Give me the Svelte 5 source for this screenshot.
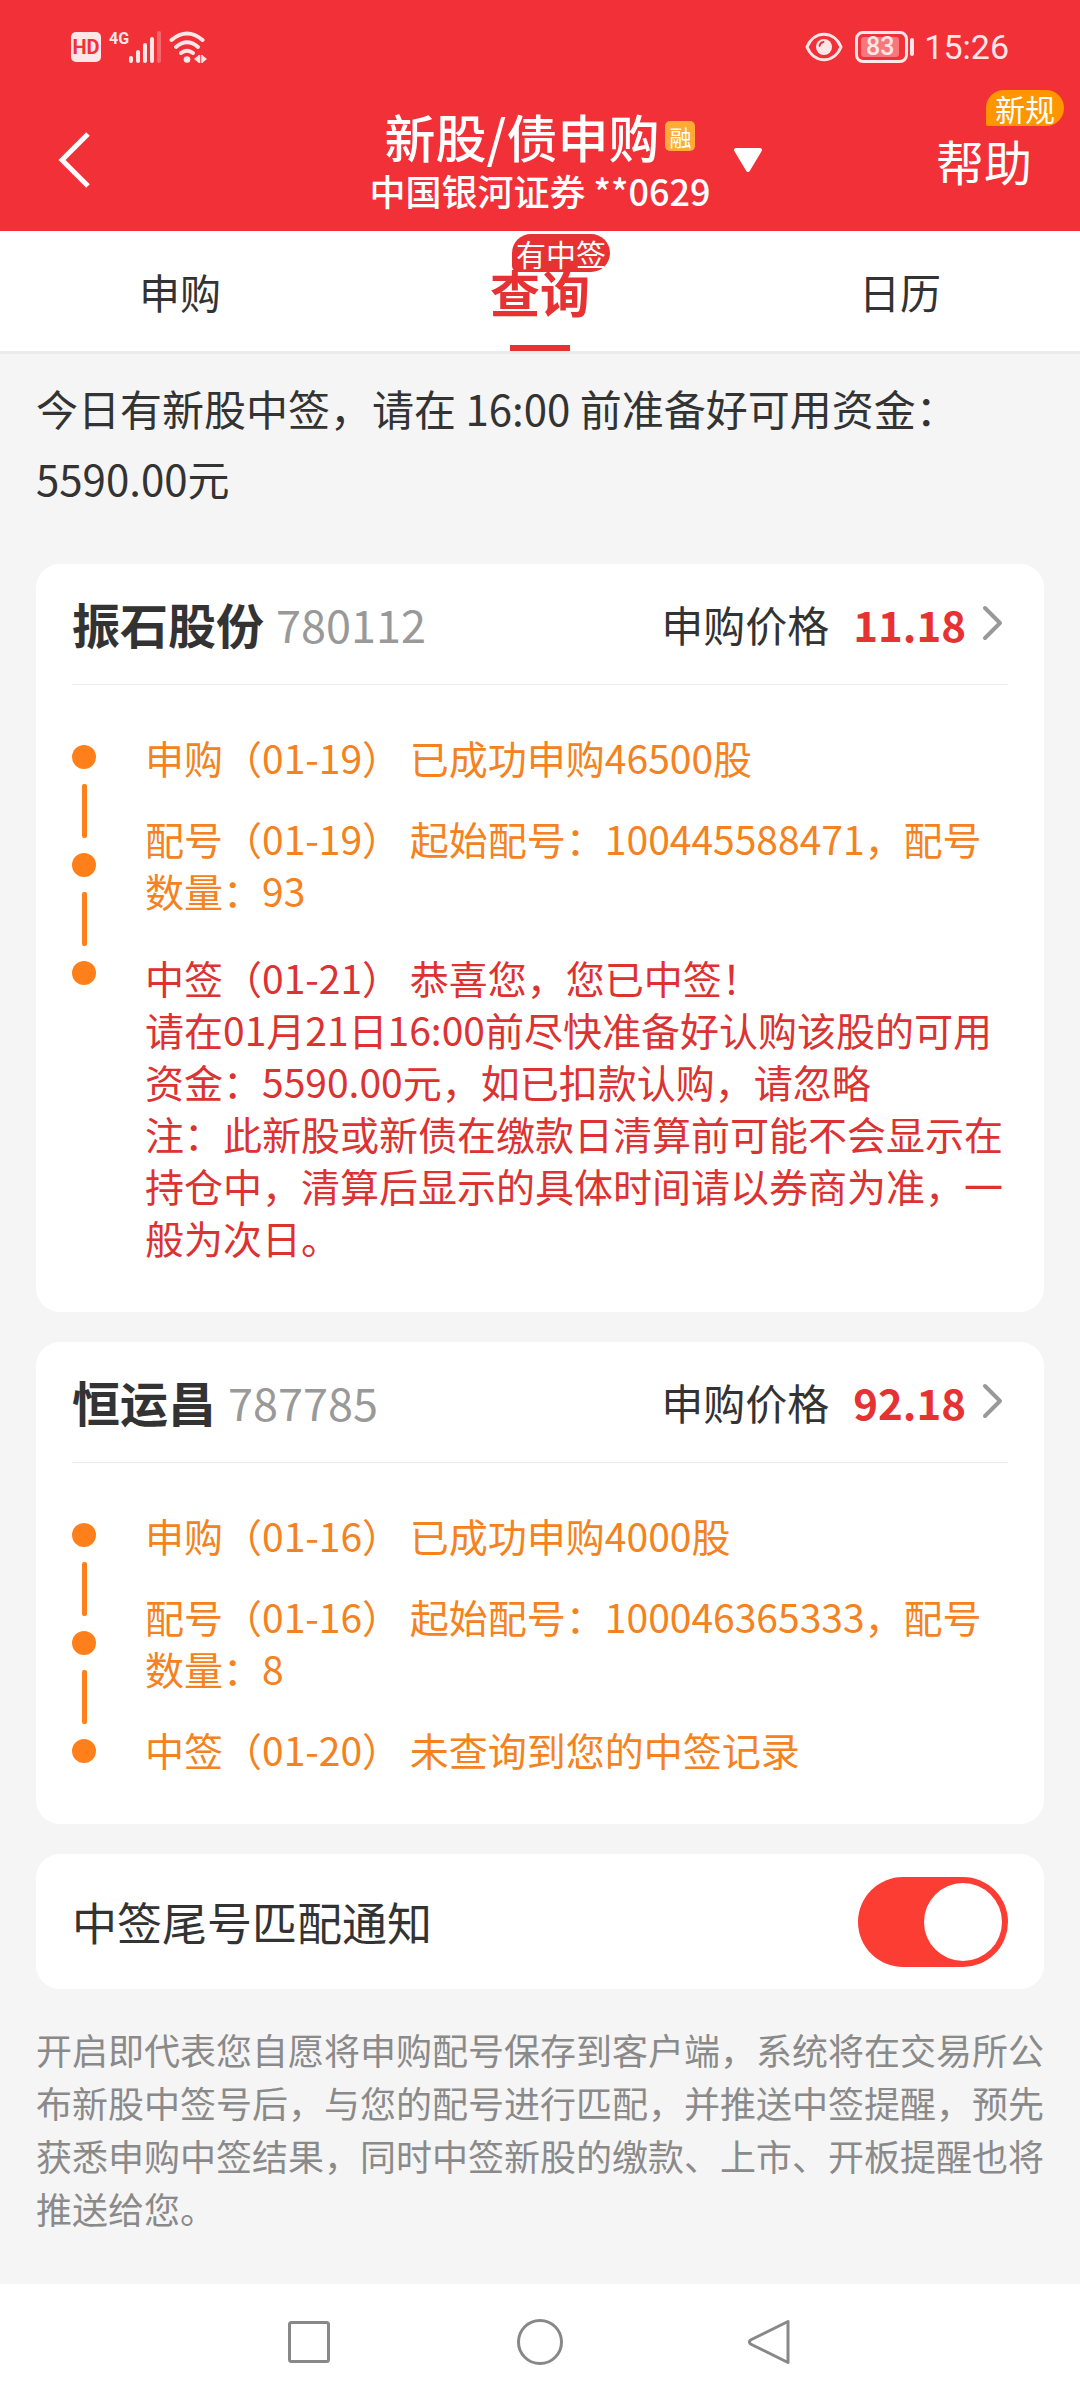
<script>
  const tabs = [
    { id: 'apply', label: '申购' },
    { id: 'query', label: '查询', badge: '有中签' },
    { id: 'calendar', label: '日历' }
  ]

  const stocks = [
    {
      name: '振石股份',
      code: '780112',
      price: '11.18',
      steps: [
        { text: '申购（01-19） 已成功申购46500股' },
        { text: '配号（01-19） 起始配号：100445588471，配号数量：93' },
        {
          won: true,
          text:
            '中签（01-21） 恭喜您，您已中签！\n' +
            '请在01月21日16:00前尽快准备好认购该股的可用资金：5590.00元，如已扣款认购，请忽略\n' +
            '注：此新股或新债在缴款日清算前可能不会显示在持仓中，清算后显示的具体时间请以券商为准，一般为次日。'
        }
      ]
    },
    {
      name: '恒运昌',
      code: '787785',
      price: '92.18',
      steps: [
        { text: '申购（01-16） 已成功申购4000股' },
        { text: '配号（01-16） 起始配号：100046365333，配号数量：8' },
        { text: '中签（01-20） 未查询到您的中签记录' }
      ]
    }
  ]

  let active = $state('query')
  let notify = $state(true)
</script>

<div class="page">
  <header class="header">
    <div class="status">
      <div class="status-side">
        <span class="hd">HD</span>
        <span class="network">4G</span>
        <svg class="signal" width="32" height="32" viewBox="0 0 32 32" fill="#ffe6e7" aria-hidden="true">
          <rect x="0" y="25" width="4" height="7" rx="2" />
          <rect x="7" y="19" width="4" height="13" rx="2" />
          <rect x="14" y="12" width="4" height="20" rx="2" />
          <rect x="21" y="6" width="4" height="26" rx="2" />
          <rect x="28" y="0" width="4" height="32" rx="2" opacity="0.3" />
        </svg>
        <svg class="wifi" width="39" height="32" viewBox="0 0 39 32" fill="none" stroke="#ffe6e7" stroke-width="4" stroke-linecap="round" aria-hidden="true">
          <path d="M2.500 9 Q18 -4 33.500 9" />
          <path d="M7 16 Q18 6.500 29 16" />
          <path d="M12 22 Q18 17.500 24 22" />
          <circle cx="18" cy="28.500" r="3.300" fill="#ffe6e7" stroke="none" />
          <path d="M30 24v8l-5-4zM33 24v8l5-4z" fill="#ffe6e7" stroke="none" />
          <path d="M30.500 24v8M33 24v8" stroke-width="1.500" stroke-linecap="butt" />
        </svg>
      </div>
      <div class="status-side">
        <svg class="eye" width="38" height="30" viewBox="0 0 38 30" fill="none" aria-hidden="true">
          <path d="M2 15C9 -2 29 -2 36 15C29 32 9 32 2 15Z" stroke="#ffe6e7" stroke-width="3" />
          <circle cx="19" cy="15" r="8" fill="#ffe6e7" />
          <path d="M14.500 14q.5-3.500 4-4" stroke="#f23038" stroke-width="1.800" stroke-linecap="round" />
        </svg>
        <span class="battery"><span class="level">83</span></span>
        <span class="nub"></span>
        <time class="clock">15:26</time>
      </div>
    </div>

    <div class="bar">
      <button class="back" aria-label="返回">
        <svg width="32" height="56" viewBox="0 0 32 56" fill="none" stroke="#fff" stroke-width="5" aria-hidden="true">
          <path d="M30 2L4 28L30 54" />
        </svg>
      </button>
      <div class="heading">
        <h1>新股/债申购<span class="margin-tag">融</span></h1>
        <p>中国银河证券 **0629</p>
      </div>
      <div class="bar-right">
        <button class="switch-account" aria-label="切换账户">
          <svg width="30" height="25" viewBox="0 0 30 25" aria-hidden="true">
            <path d="M3 2H27L15 22Z" fill="#fff" stroke="#fff" stroke-width="4" stroke-linejoin="round" />
          </svg>
        </button>
        <a class="help" href="#help">帮助<span class="help-badge">新规</span></a>
      </div>
    </div>
  </header>

  <nav class="tabs">
    {#each tabs as tab}
      <button class="tab" class:active={active === tab.id} onclick={() => (active = tab.id)}>
        <span class="tab-label">
          {tab.label}
          {#if tab.badge}<span class="tab-badge">{tab.badge}</span>{/if}
        </span>
      </button>
    {/each}
  </nav>

  <main>
    <p class="summary">今日有新股中签，请在 16:00 前准备好可用资金：5590.00元</p>

    {#each stocks as stock}
      <section class="card">
        <a class="card-head" href="#{stock.code}">
          <h2>{stock.name}</h2>
          <span class="code">{stock.code}</span>
          <span class="price-label">申购价格</span>
          <strong class="price">{stock.price}</strong>
          <svg width="22" height="36" viewBox="0 0 22 36" fill="none" stroke="#999" stroke-width="4" stroke-linecap="round" stroke-linejoin="round" aria-hidden="true">
            <path d="M3 3L18 18L3 33" />
          </svg>
        </a>
        <div class="card-body">
          <div class="rail" aria-hidden="true">
            {#each stock.steps as _, i}
              {#if i > 0}<span class="line"></span>{/if}
              <span class="dot"></span>
            {/each}
          </div>
          <ol class="steps">
            {#each stock.steps as step}
              <li class:won={step.won}>{step.text}</li>
            {/each}
          </ol>
        </div>
      </section>
    {/each}

    <div class="card setting">
      <label for="notify">中签尾号匹配通知</label>
      <input id="notify" type="checkbox" role="switch" bind:checked={notify} />
    </div>

    <p class="notice">开启即代表您自愿将申购配号保存到客户端，系统将在交易所公布新股中签号后，与您的配号进行匹配，并推送中签提醒，预先获悉申购中签结果，同时中签新股的缴款、上市、开板提醒也将推送给您。</p>
  </main>

  <footer class="system-nav">
    <button aria-label="最近任务">
      <svg width="48" height="48" viewBox="0 0 48 48" aria-hidden="true"><rect x="4.500" y="4.500" width="39" height="39" rx="2" /></svg>
    </button>
    <button aria-label="主屏幕">
      <svg width="48" height="48" viewBox="0 0 48 48" aria-hidden="true"><circle cx="24" cy="24" r="21.500" /></svg>
    </button>
    <button aria-label="系统返回">
      <svg width="48" height="48" viewBox="0 0 48 48" aria-hidden="true"><path d="M41 3.500V44.500L3.500 26Q1.500 24 3.500 22Z" /></svg>
    </button>
  </footer>
</div>

<style>
  :global(body) {
    margin: 0;
    background: #f5f5f5;
  }

  .page {
    min-height: 100vh;
    display: flex;
    flex-direction: column;
    font-family: 'Noto Sans CJK SC', sans-serif;
    color: #333;
    background: #f5f5f5;
  }

  h1, h2, p, ol {
    margin: 0;
    padding: 0;
    font-weight: 400;
  }

  button {
    padding: 0;
    border: 0;
    background: none;
    font: inherit;
    color: inherit;
  }

  a {
    color: inherit;
    text-decoration: none;
  }

  svg {
    display: block;
  }

  .header {
    background: #f23038;
    color: #fff;
  }

  .status {
    height: 92px;
    padding: 2px 71px 0;
    display: flex;
    align-items: center;
    justify-content: space-between;
    box-sizing: border-box;
    color: #ffe6e7;
    font-family: Roboto, sans-serif;
  }

  .status-side {
    display: flex;
    align-items: center;
  }

  .hd {
    width: 30px;
    height: 30px;
    border-radius: 5px;
    background: #ffe6e7;
    color: #f23038;
    font-size: 20px;
    font-weight: 700;
    line-height: 30px;
    text-align: center;
  }

  .network {
    margin-left: 8px;
    align-self: flex-start;
    font-size: 16px;
    font-weight: 700;
    line-height: 16px;
  }

  .wifi {
    margin-left: 8px;
  }

  .battery {
    margin-left: 12px;
    padding: 3px;
    border: 3px solid #ffe6e7;
    border-radius: 8px;
  }

  .level {
    display: block;
    width: 38px;
    margin-right: 3px;
    border-radius: 3px;
    background: rgba(255, 255, 255, 0.35);
    font-size: 25px;
    font-weight: 500;
    line-height: 20px;
    text-align: center;
  }

  .nub {
    width: 4px;
    height: 18px;
    margin-left: 2px;
    border-radius: 2px;
    background: #ffe6e7;
  }

  .clock {
    margin-left: 10px;
    font-size: 34px;
    line-height: 40px;
  }

  .bar {
    display: grid;
    grid-template-columns: 1fr auto 1fr;
    align-items: center;
    padding: 14px 48px 17px;
  }

  .back {
    justify-self: start;
    padding-left: 10px;
  }

  .heading {
    text-align: center;
  }

  h1 {
    display: flex;
    align-items: center;
    justify-content: center;
    gap: 6px;
    font-size: 51px;
    font-weight: 500;
    line-height: 60px;
  }

  .margin-tag {
    width: 30px;
    height: 30px;
    border-radius: 5px;
    background: #ffab35;
    font-size: 22px;
    font-weight: 400;
    line-height: 30px;
    text-align: center;
  }

  .heading p {
    font-size: 36px;
    font-weight: 500;
    line-height: 48px;
  }

  .bar-right {
    display: flex;
    align-items: center;
    justify-content: space-between;
    padding-left: 22px;
  }

  .help {
    position: relative;
    font-size: 48px;
    line-height: 60px;
  }

  .help-badge {
    position: absolute;
    left: 50px;
    bottom: 64px;
    width: 78px;
    border-radius: 18px 18px 18px 2px;
    background: #ff9600;
    font-size: 30px;
    line-height: 36px;
    text-align: center;
    white-space: nowrap;
  }

  .tabs {
    display: flex;
    background: #fff;
    border-bottom: 3px solid #ebebeb;
  }

  .tab {
    flex: 1;
    display: flex;
    flex-direction: column;
    align-items: center;
    height: 120px;
    font-size: 41px;
    line-height: 120px;
  }

  .tab-label {
    position: relative;
  }

  .tab.active {
    color: #e63232;
    font-size: 50px;
    font-weight: 700;
  }

  .tab.active::after {
    content: '';
    width: 60px;
    height: 6px;
    margin-top: -6px;
    background: #e63232;
  }

  .tab-badge {
    position: absolute;
    top: 3px;
    left: 22px;
    width: 98px;
    border-radius: 19px 19px 19px 6px;
    background: #e63232;
    color: #fff;
    font-size: 30px;
    font-weight: 400;
    line-height: 38px;
  }

  main {
    flex: 1;
    padding: 19px 36px;
  }

  .summary {
    margin-bottom: 51px;
    font-size: 42px;
    line-height: 70px;
  }

  .card {
    margin-bottom: 30px;
    padding: 0 36px;
    border-radius: 24px;
    background: #fff;
  }

  .card-head {
    display: flex;
    align-items: center;
    height: 118px;
    padding: 0 4px 2px 0;
    border-bottom: 1px solid #ebebeb;
  }

  h2 {
    font-size: 48px;
    font-weight: 700;
  }

  .code {
    flex: 1;
    margin-left: 12px;
    color: #999;
    font-size: 45px;
  }

  .price-label {
    font-size: 42px;
  }

  .price {
    margin: 0 16px 0 24px;
    color: #e63232;
    font-size: 42px;
    font-weight: 700;
  }

  .card-body {
    display: flex;
    gap: 49px;
    padding: 46px 0 49px;
  }

  .rail {
    display: flex;
    flex-direction: column;
    align-items: center;
    gap: 15px;
    padding-top: 14px;
  }

  .dot {
    width: 24px;
    height: 24px;
    border-radius: 50%;
    background: #ff801a;
  }

  .line {
    width: 5px;
    height: 54px;
    border-radius: 2px;
    background: #ff801a;
  }

  .steps {
    flex: 1;
    display: flex;
    flex-direction: column;
    gap: 29px;
    list-style: none;
    color: #f58220;
    font-size: 39px;
    line-height: 52px;
    white-space: pre-line;
  }

  .won {
    padding-top: 6px;
    color: #dc3232;
  }

  .setting {
    display: flex;
    align-items: center;
    justify-content: space-between;
    height: 135px;
    font-size: 45px;
  }

  .setting input {
    appearance: none;
    display: flex;
    width: 150px;
    height: 90px;
    margin: 0;
    padding: 6px;
    box-sizing: border-box;
    border-radius: 45px;
    background: #ccc;
  }

  .setting input::before {
    content: '';
    width: 78px;
    border-radius: 50%;
    background: #fff;
  }

  .setting input:checked {
    justify-content: flex-end;
    background: #fc3d33;
  }

  .notice {
    padding-top: 4px;
    color: #8a8a8a;
    font-size: 36px;
    line-height: 53px;
  }

  .system-nav {
    display: flex;
    align-items: center;
    justify-content: center;
    gap: 183px;
    height: 116px;
    background: #fff;
  }

  .system-nav svg {
    fill: none;
    stroke: #888;
    stroke-width: 3;
    stroke-linejoin: round;
  }
</style>
